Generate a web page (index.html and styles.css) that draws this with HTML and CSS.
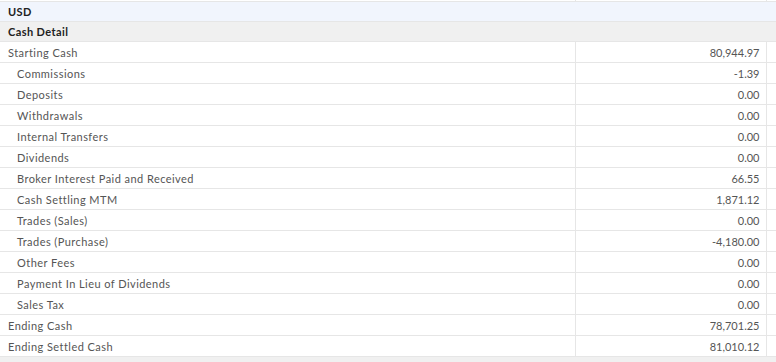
FILE: index.html
```html
<!DOCTYPE html>
<html>
<head>
<meta charset="utf-8">
<link rel="stylesheet" href="styles.css">
</head>
<body>
<table class="grid">
  <colgroup>
    <col class="c-label">
    <col class="c-value">
    <col class="c-extra">
  </colgroup>
  <tbody>
    <tr class="stub"><td></td><td></td><td></td></tr>
    <tr class="band band-blue"><td colspan="3">USD</td></tr>
    <tr class="band band-gray"><td colspan="3">Cash Detail</td></tr>
    <tr class="row"><td class="label">Starting Cash</td><td class="value">80,944.97</td><td></td></tr>
    <tr class="row sub"><td class="label">Commissions</td><td class="value">-1.39</td><td></td></tr>
    <tr class="row sub"><td class="label">Deposits</td><td class="value">0.00</td><td></td></tr>
    <tr class="row sub"><td class="label">Withdrawals</td><td class="value">0.00</td><td></td></tr>
    <tr class="row sub"><td class="label">Internal Transfers</td><td class="value">0.00</td><td></td></tr>
    <tr class="row sub"><td class="label">Dividends</td><td class="value">0.00</td><td></td></tr>
    <tr class="row sub"><td class="label">Broker Interest Paid and Received</td><td class="value">66.55</td><td></td></tr>
    <tr class="row sub"><td class="label">Cash Settling MTM</td><td class="value">1,871.12</td><td></td></tr>
    <tr class="row sub"><td class="label">Trades (Sales)</td><td class="value">0.00</td><td></td></tr>
    <tr class="row sub"><td class="label">Trades (Purchase)</td><td class="value">-4,180.00</td><td></td></tr>
    <tr class="row sub"><td class="label">Other Fees</td><td class="value">0.00</td><td></td></tr>
    <tr class="row sub"><td class="label">Payment In Lieu of Dividends</td><td class="value">0.00</td><td></td></tr>
    <tr class="row sub"><td class="label">Sales Tax</td><td class="value">0.00</td><td></td></tr>
    <tr class="row"><td class="label">Ending Cash</td><td class="value">78,701.25</td><td></td></tr>
    <tr class="row"><td class="label">Ending Settled Cash</td><td class="value">81,010.12</td><td></td></tr>
    <tr class="band band-gray foot"><td colspan="3"></td></tr>
  </tbody>
</table>
</body>
</html>
```

FILE: styles.css
```css
html, body {
  margin: 0;
  padding: 0;
  background: #ffffff;
}
body {
  font-family: Lato, "Open Sans", "Liberation Sans", sans-serif;
  font-size: 11px;
  color: #555555;
}
.grid {
  width: 776px;
  table-layout: fixed;
  border-collapse: collapse;
}
.c-label { width: 575px; }
.c-value { width: 191px; }
.c-extra { width: 10px; }
.grid td {
  padding: 0;
  border-bottom: 1px solid #e6e6e6;
  border-right: 1px solid #e6e6e6;
  white-space: nowrap;
  overflow: hidden;
}
.stub td {
  height: 1px;
}
.band td {
  height: 19px;
  padding-left: 8px;
  font-weight: 700;
  letter-spacing: 0.4px;
  color: #222222;
  border-right: none;
}
.band-blue td { background: #f1f5fd; }
.band-gray td { background: #f0f0f0; }
.foot td { height: 6px; border-bottom: none; }
.row td {
  height: 20px;
}
.label {
  padding-left: 8px !important;
  letter-spacing: 0.45px;
}
.sub .label {
  padding-left: 17px !important;
}
.value {
  text-align: right;
  padding-right: 6px !important;
}
```
